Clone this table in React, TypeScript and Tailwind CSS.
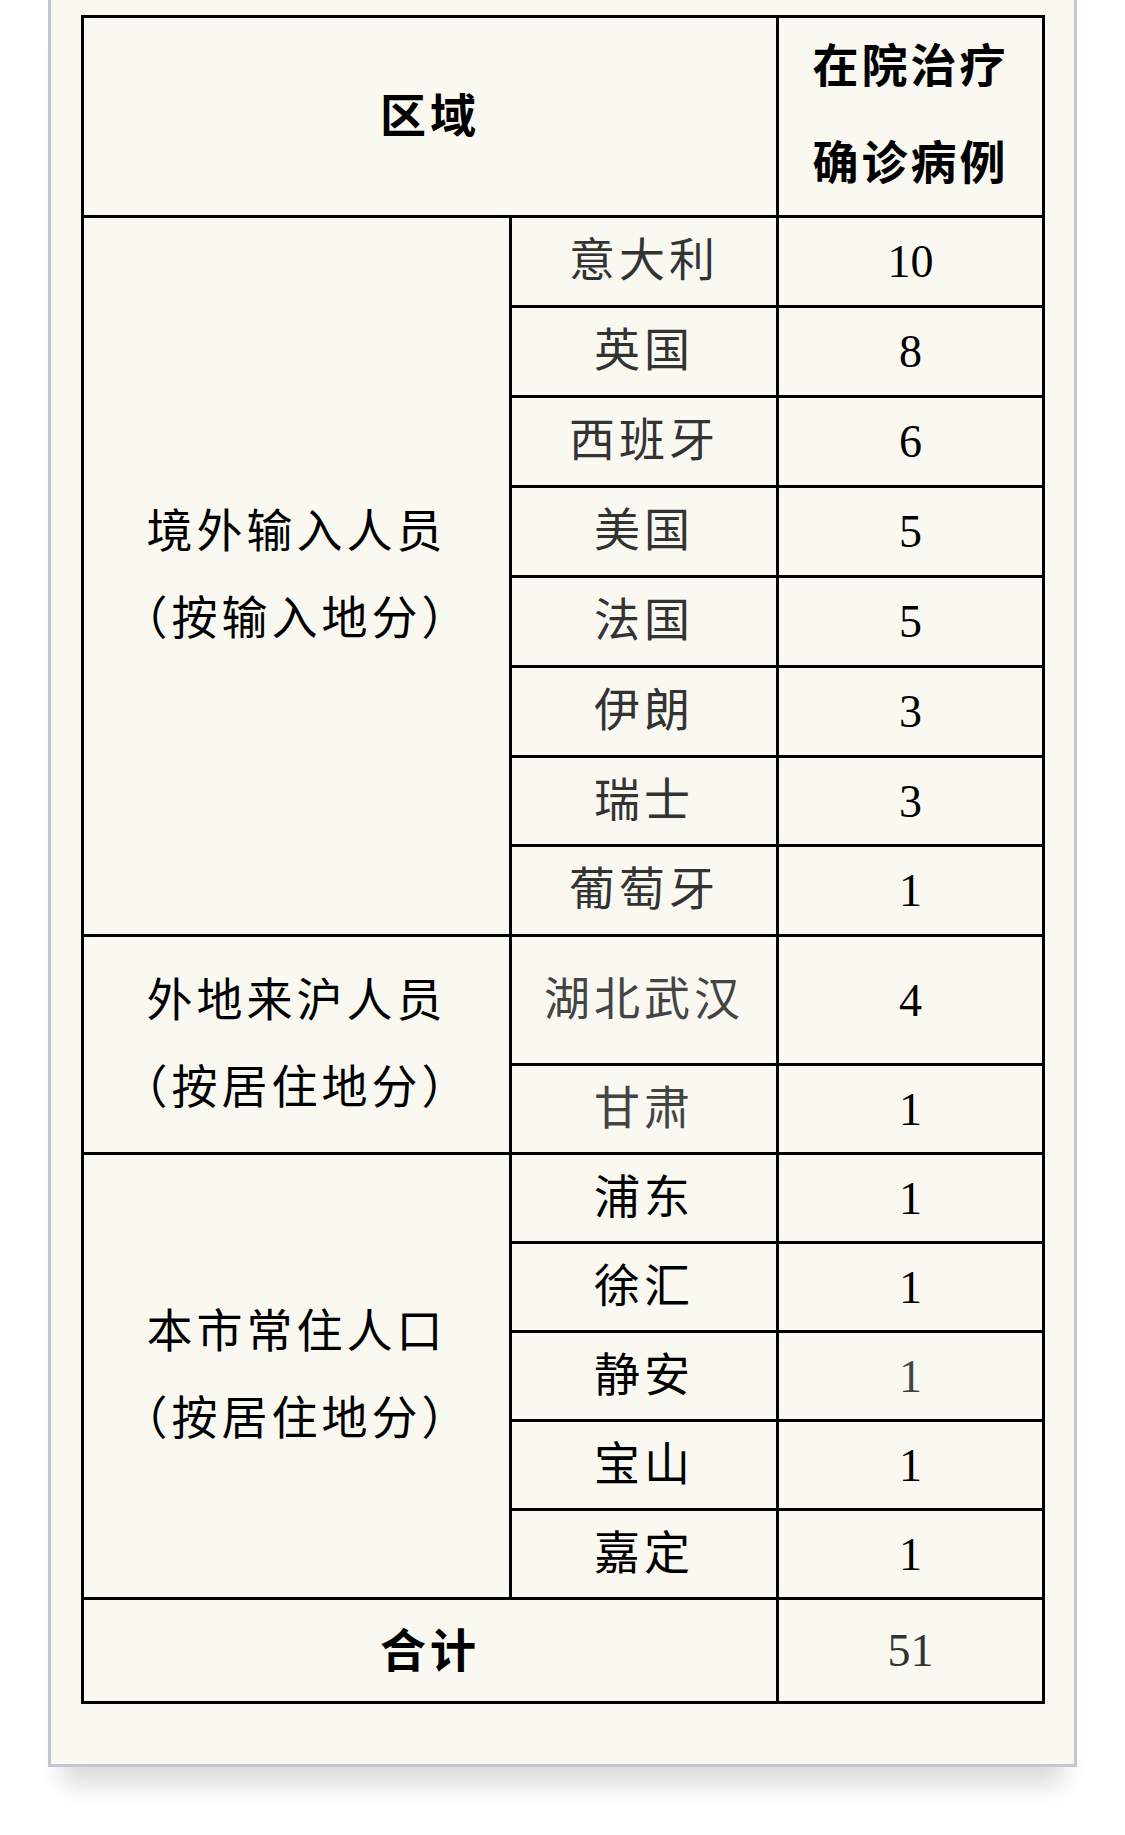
import React from "react";

type Row = { place: string; count: string; placeColor: string; countColor: string; h: string };

const cjk = "font-['Noto_Sans_CJK_SC',sans-serif] tracking-[4px]";
const serif = "font-['Liberation_Serif','Times_New_Roman',serif]";

const abroad: Row[] = [
  { place: "意大利", count: "10", placeColor: "text-[#333]", countColor: "text-black", h: "h-[90px]" },
  { place: "英国", count: "8", placeColor: "text-[#333]", countColor: "text-black", h: "h-[90px]" },
  { place: "西班牙", count: "6", placeColor: "text-[#333]", countColor: "text-black", h: "h-[90px]" },
  { place: "美国", count: "5", placeColor: "text-[#333]", countColor: "text-black", h: "h-[90px]" },
  { place: "法国", count: "5", placeColor: "text-[#333]", countColor: "text-black", h: "h-[90px]" },
  { place: "伊朗", count: "3", placeColor: "text-[#333]", countColor: "text-black", h: "h-[90px]" },
  { place: "瑞士", count: "3", placeColor: "text-[#333]", countColor: "text-black", h: "h-[89px]" },
  { place: "葡萄牙", count: "1", placeColor: "text-[#333]", countColor: "text-black", h: "h-[90px]" },
];

const outside: Row[] = [
  { place: "湖北武汉", count: "4", placeColor: "text-[#444]", countColor: "text-black", h: "h-[129px]" },
  { place: "甘肃", count: "1", placeColor: "text-[#444]", countColor: "text-black", h: "h-[89px]" },
];

const local: Row[] = [
  { place: "浦东", count: "1", placeColor: "text-black", countColor: "text-black", h: "h-[89px]" },
  { place: "徐汇", count: "1", placeColor: "text-black", countColor: "text-black", h: "h-[89px]" },
  { place: "静安", count: "1", placeColor: "text-black", countColor: "text-[#444]", h: "h-[89px]" },
  { place: "宝山", count: "1", placeColor: "text-black", countColor: "text-black", h: "h-[89px]" },
  { place: "嘉定", count: "1", placeColor: "text-black", countColor: "text-black", h: "h-[89px]" },
];

const cell = "border-[3px] border-black text-center align-middle p-0";

// Noto CJK sits a little low in its line box; lift the glyphs without touching row height
function Lift({ children, by = "-translate-y-[5px]" }: { children: React.ReactNode; by?: string }) {
  return <span className={`block ${by}`}>{children}</span>;
}

function Group({ title, sub, rows }: { title: string; sub: string; rows: Row[] }) {
  return (
    <>
      {rows.map((r, i) => (
        <tr key={r.place} className={r.h}>
          {i === 0 && (
            <td rowSpan={rows.length} className={`${cell} ${cjk} text-black leading-[87px]`}>
              <Lift>
                {title}
                <br />
                {sub}
              </Lift>
            </td>
          )}
          <td className={`${cell} ${cjk} ${r.placeColor}`}>
            <Lift>{r.place}</Lift>
          </td>
          <td className={`${cell} ${serif} ${r.countColor}`}>{r.count}</td>
        </tr>
      ))}
    </>
  );
}

export default function App() {
  return (
    <div className="w-[1125px] h-[1835px] bg-white overflow-hidden">
      <div className="ml-[48px] w-[1029px] bg-[#f9f9f2] border-x-[3px] border-b-[3px] border-[#c2c8d3] pt-[15px] pl-[30px] pb-[60px] shadow-[0_32px_22px_-14px_rgba(0,0,0,0.14)]">
        <table className="w-[961px] border-collapse border-[3px] border-black table-fixed text-[46px]">
          <colgroup>
            <col className="w-[428px]" />
            <col className="w-[267px]" />
            <col className="w-[266px]" />
          </colgroup>
          <tbody>
            <tr className="h-[200px]">
              <td colSpan={2} className={`${cell} ${cjk} font-bold text-black`}>
                <Lift by="-translate-y-[4px]">区域</Lift>
              </td>
              <td className={`${cell} ${cjk} !tracking-[3px] font-bold text-black leading-[97px]`}>
                <Lift by="-translate-y-[6px]">
                  在院治疗
                  <br />
                  确诊病例
                </Lift>
              </td>
            </tr>
            <Group title="境外输入人员" sub="（按输入地分）" rows={abroad} />
            <Group title="外地来沪人员" sub="（按居住地分）" rows={outside} />
            <Group title="本市常住人口" sub="（按居住地分）" rows={local} />
            <tr className="h-[104px]">
              <td colSpan={2} className={`${cell} ${cjk} font-bold text-black`}>
                <Lift by="-translate-y-[3px]">合计</Lift>
              </td>
              <td className={`${cell} ${serif} text-[#333]`}>51</td>
            </tr>
          </tbody>
        </table>
      </div>
    </div>
  );
}
